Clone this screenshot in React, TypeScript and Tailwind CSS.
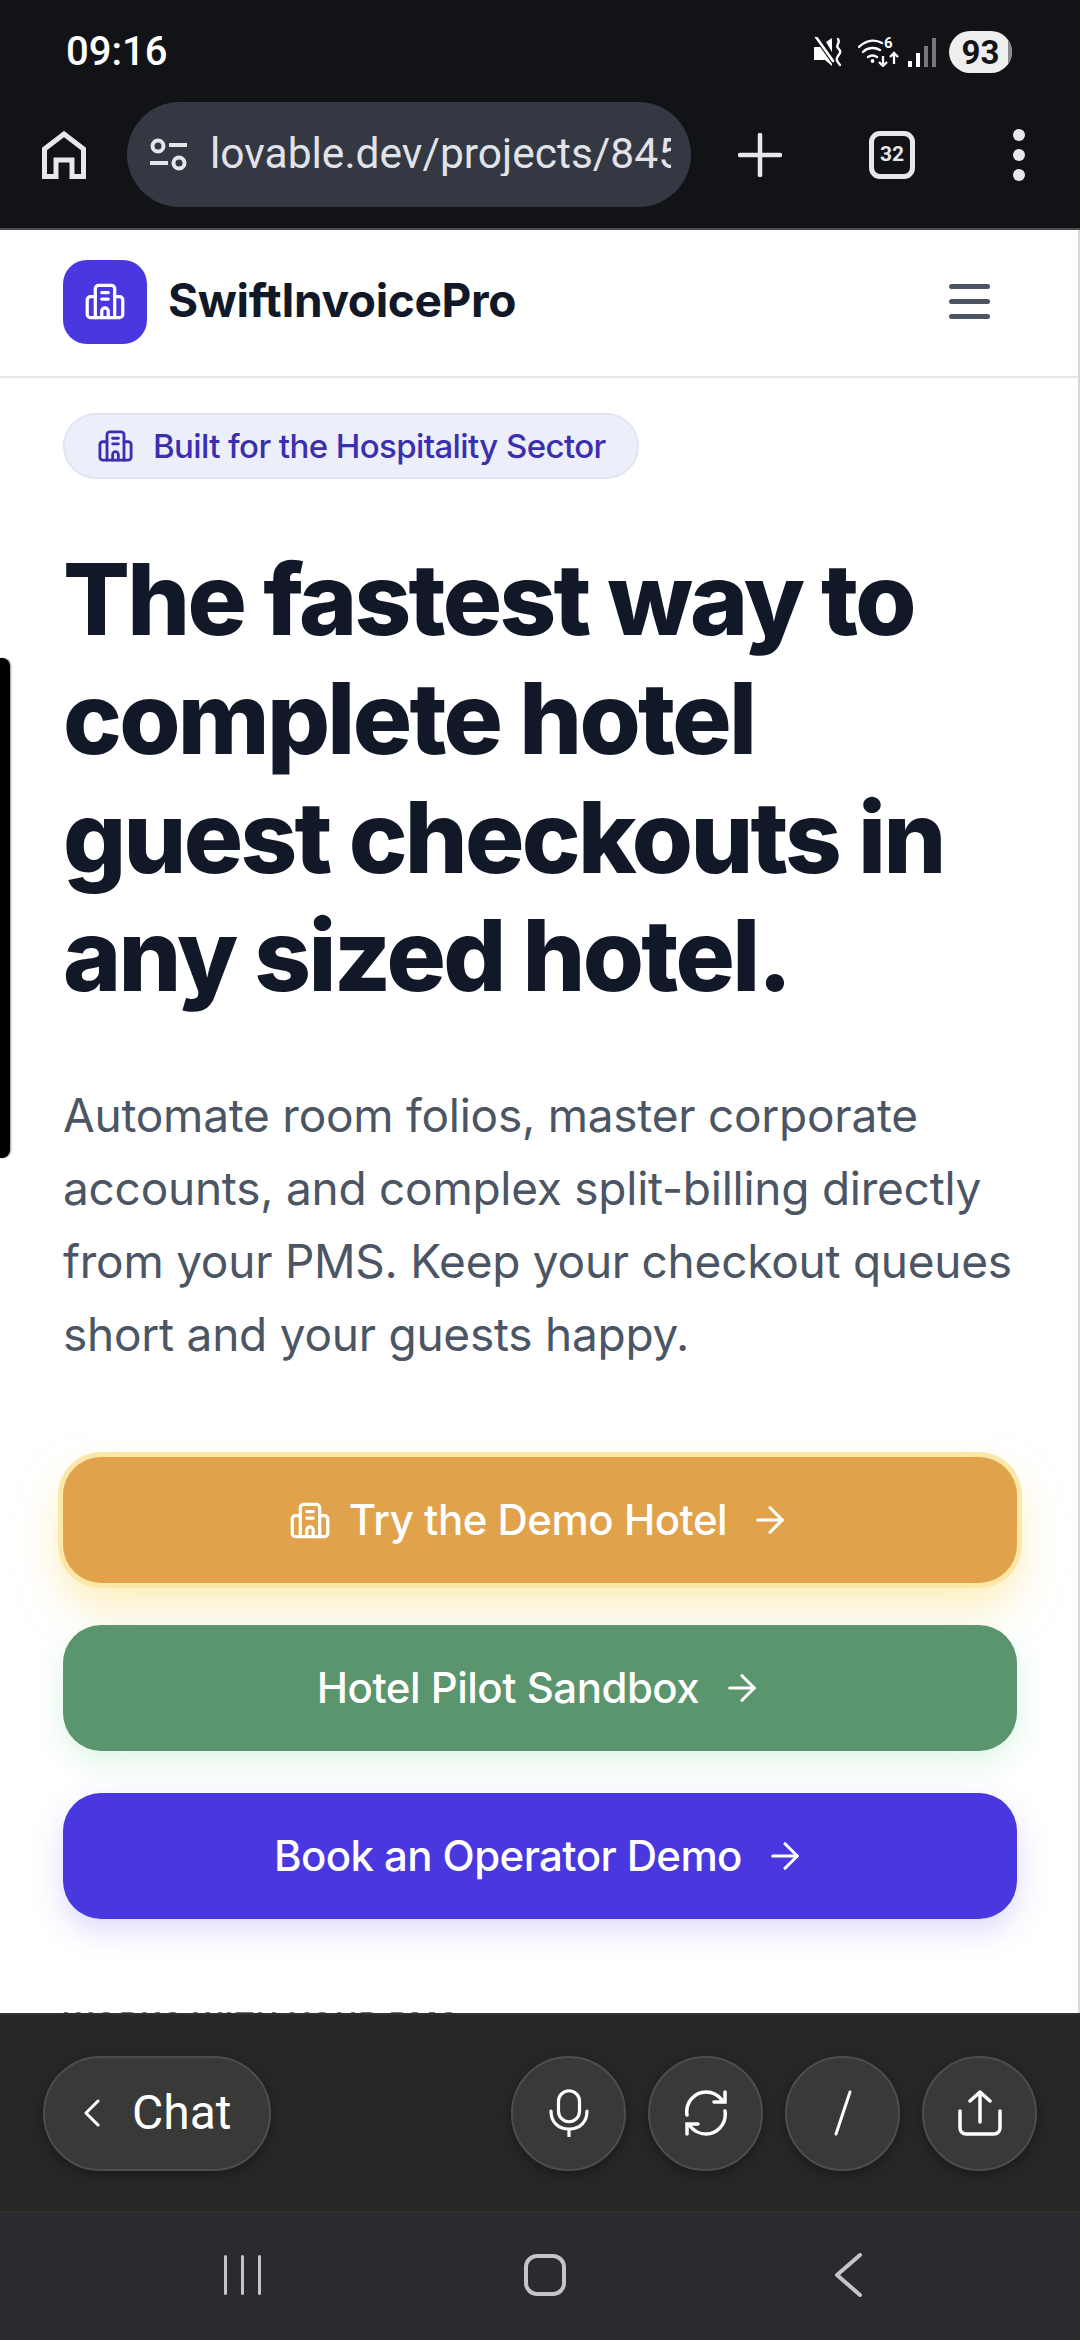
import React from "react";

function HotelIcon({ className }: { className: string }) {
  return (
    <svg viewBox="0 0 26 24" fill="none" stroke="currentColor" strokeWidth="2" strokeLinecap="round" strokeLinejoin="round" className={className}>
      <path d="M7 22V4a2 2 0 0 1 2-2h8a2 2 0 0 1 2 2v18Z" />
      <path d="M7 9H4a2 2 0 0 0-2 2v9a2 2 0 0 0 2 2h3" />
      <path d="M19 9h3a2 2 0 0 1 2 2v9a2 2 0 0 1-2 2h-3" />
      <path d="M11 6.5h4" />
      <path d="M11 10.5h4" />
      <path d="M11 22v-4a2 2 0 0 1 4 0v4" />
    </svg>
  );
}

function Arrow({ className }: { className: string }) {
  return (
    <svg viewBox="0 0 24 24" fill="none" stroke="currentColor" strokeWidth="1.8" strokeLinecap="round" strokeLinejoin="round" className={className}>
      <path d="M5 12h14" />
      <path d="m12 5 7 7-7 7" />
    </svg>
  );
}

function StatusBar() {
  return (
    <div className="flex h-[102px] items-center justify-between pl-[66px] pr-[68px] pt-[2px] font-['Roboto',sans-serif]">
      <span className="text-[40px] font-medium leading-none text-white">09:16</span>
      <div className="flex items-center">
        <svg viewBox="0 0 28 30" className="h-[30px] w-[28px] text-white">
          <path d="M0 10h6l1-1 11 14v6l-7-6H0Z" fill="currentColor" />
          <path d="M12 5l6-4v14Z" fill="currentColor" />
          <path d="M1 1l19 27" stroke="#111317" strokeWidth="2" />
          <path d="M2 0l17 24" stroke="currentColor" strokeWidth="2.6" strokeLinecap="round" />
          <path d="M24 2c3 4-3 6 0 9s3 4 0 8 0 6 2 9" fill="none" stroke="currentColor" strokeWidth="2.4" strokeLinecap="round" />
        </svg>
        <svg viewBox="0 0 42 30" className="ml-[16px] h-[30px] w-[42px] text-white">
          <path d="M1 10c7-7 16-8 23-4M5 15c5-5 12-5 17-2M10 20c3-2 6-2 9 0" fill="none" stroke="currentColor" strokeWidth="2.4" strokeLinecap="round" />
          <circle cx="14.5" cy="24" r="1.9" fill="currentColor" />
          <path d="M25 19v10m-4-4 4 4 4-4M36 27V16m-4 4 4-4 4 4" fill="none" stroke="currentColor" strokeWidth="2.3" />
        </svg>
        <span className="relative -ml-[16px] -mt-[18px] w-[10px] text-[15px] font-bold leading-none text-white">6</span>
        <svg viewBox="0 0 29 29" className="ml-[14px] h-[29px] w-[29px]">
          <rect x="0" y="23" width="4" height="6" fill="#fff" />
          <rect x="8" y="15" width="4" height="14" fill="#fff" />
          <rect x="16" y="8" width="4" height="21" fill="#77787a" />
          <rect x="24" y="0" width="4" height="29" fill="#77787a" />
        </svg>
        <div className="relative ml-[12px] flex h-[42px] w-[63px] items-center justify-center overflow-hidden rounded-full bg-[#eeeeef]">
          <div className="absolute right-0 top-0 h-full w-[4px] bg-[#8a8b8d]" />
          <span className="text-[33px] font-bold leading-none text-[#111317]">93</span>
        </div>
      </div>
    </div>
  );
}

function BrowserBar() {
  return (
    <div className="flex h-[105px] items-center">
      <svg viewBox="0 0 44 48" className="ml-[42px] h-[48px] w-[44px]" fill="none" stroke="#e8e8ec" strokeWidth="5">
        <path d="M2.5 45.5V18L22 3l19.5 15v27.5H30V29H14v16.5Z" />
      </svg>
      <div className="ml-[41px] flex h-[105px] w-[564px] items-center overflow-hidden rounded-full bg-[#333842] pl-[22px] pr-[20px]">
        <svg viewBox="0 0 40 36" className="h-[36px] w-[40px] shrink-0" fill="none" stroke="#e4e5e9" strokeWidth="4">
          <circle cx="9" cy="9" r="5.5" />
          <path d="M20 8h18" />
          <circle cx="30" cy="26" r="5.5" />
          <path d="M1 26h18" />
        </svg>
        <span className="ml-[21px] overflow-hidden whitespace-nowrap font-['Roboto',sans-serif] text-[42.5px] font-normal leading-none text-[#e2e3e8]">lovable.dev/projects/845a</span>
      </div>
      <svg viewBox="0 0 44 44" className="ml-[47px] h-[44px] w-[44px]" stroke="#e8e8ec" strokeWidth="4.5" strokeLinecap="round">
        <path d="M22 2v40M2 22h40" />
      </svg>
      <div className="ml-[87px] flex h-[48px] w-[46px] items-center justify-center rounded-[11px] border-[5px] border-[#e8e8ec] font-['Roboto',sans-serif] text-[21px] font-bold leading-none text-[#e8e8ec]">32</div>
      <div className="ml-[98px] flex flex-col gap-[8px]">
        <div className="h-[12px] w-[12px] rounded-full bg-[#e8e8ec]" />
        <div className="h-[12px] w-[12px] rounded-full bg-[#e8e8ec]" />
        <div className="h-[12px] w-[12px] rounded-full bg-[#e8e8ec]" />
      </div>
    </div>
  );
}

function CircleButton({ children }: { children: React.ReactNode }) {
  return (
    <div className="flex h-[115px] w-[115px] items-center justify-center rounded-full border-2 border-[#4d4d4b] bg-[#393937] shadow-[0_4px_10px_rgba(0,0,0,0.3)]">
      {children}
    </div>
  );
}

export default function App() {
  return (
    <div className="relative flex h-[2340px] w-[1080px] flex-col overflow-hidden bg-white font-['Inter',sans-serif]">
      <header className="h-[228px] shrink-0 bg-[#111317]">
        <StatusBar />
        <BrowserBar />
      </header>
      <div className="h-[2px] shrink-0 bg-[#4a4b4d]" />

      <main className="min-h-0 flex-1 overflow-hidden border-r-2 border-[#d8d8da]">
        <nav className="flex h-[148px] items-center justify-between border-b-2 border-[#e5e7eb] pb-[3px] pl-[63px] pr-[88px]">
          <div className="flex items-center">
            <div className="flex h-[84px] w-[84px] items-center justify-center rounded-[24px] bg-[#4938e0] text-white">
              <HotelIcon className="h-[39px] w-[42px]" />
            </div>
            <span className="mb-[4px] ml-[21px] text-[46px] font-bold leading-none tracking-[-0.35px] text-[#111827]">SwiftInvoicePro</span>
          </div>
          <div className="flex flex-col gap-[10px]">
            <div className="h-[5px] w-[41px] rounded-full bg-[#4b5563]" />
            <div className="h-[5px] w-[41px] rounded-full bg-[#4b5563]" />
            <div className="h-[5px] w-[41px] rounded-full bg-[#4b5563]" />
          </div>
        </nav>

        <div className="pl-[63px] pr-[61px] pt-[35px]">
          <div className="flex h-[66px] w-[576px] items-center rounded-full border-2 border-[#e0e4f5] bg-[#eceff9] pl-[32px] text-[#3b2fb0]">
            <HotelIcon className="h-[34px] w-[37px]" />
            <span className="ml-[19px] whitespace-nowrap text-[33px] font-medium leading-none tracking-[-0.6px]">Built for the Hospitality Sector</span>
          </div>

          <h1 className="mt-[61px] text-[99px] font-extrabold leading-[118.8px] tracking-[-2.7px] text-[#111827]">
            The fastest way to
            <br />
            complete hotel
            <br />
            guest checkouts in
            <br />
            any sized hotel.
          </h1>

          <p className="mt-[64px] text-[46px] leading-[73px] tracking-[-0.25px] text-[#4b5563]">
            Automate room folios, master corporate
            <br />
            accounts, and complex split-billing directly
            <br />
            from your PMS. Keep your checkout queues
            <br />
            short and your guests happy.
          </p>

          <div className="mt-[86px] flex flex-col gap-[42px]">
            <div className="flex h-[126px] items-center justify-center rounded-[38px] bg-[#e0a24b] text-white shadow-[0_0_0_5px_#fbe8a8,0_22px_44px_rgba(250,220,110,0.5)]">
              <HotelIcon className="h-[39px] w-[42px]" />
              <span className="ml-[18px] text-[42px] font-medium leading-none tracking-[-0.5px]">Try the Demo Hotel</span>
              <Arrow className="ml-[22px] h-[42px] w-[42px]" />
            </div>
            <div className="flex h-[126px] items-center justify-center rounded-[38px] bg-[#5a956d] text-white shadow-[0_12px_30px_rgba(120,220,160,0.25)]">
              <span className="text-[42px] font-medium leading-none tracking-[-0.5px]">Hotel Pilot Sandbox</span>
              <Arrow className="ml-[22px] h-[42px] w-[42px]" />
            </div>
            <div className="flex h-[126px] items-center justify-center rounded-[38px] bg-[#4938e0] text-white shadow-[0_12px_30px_rgba(120,110,240,0.25)]">
              <span className="text-[42px] font-medium leading-none tracking-[-0.6px]">Book an Operator Demo</span>
              <Arrow className="ml-[22px] h-[42px] w-[42px]" />
            </div>
          </div>

          <p className="mt-[89px] text-[30px] font-semibold uppercase leading-none tracking-[1.5px] text-[#6b7280]">Works with your PMS</p>
        </div>
      </main>

      <div className="flex h-[200px] shrink-0 items-center justify-between border-y-2 border-[#30302f] bg-[#262624] pl-[43px] pr-[43px]">
        <div className="flex h-[115px] w-[228px] items-center rounded-full border-2 border-[#4d4d4b] bg-[#393937] pl-[38px] text-white shadow-[0_4px_10px_rgba(0,0,0,0.3)]">
          <svg viewBox="0 0 17 28" className="h-[28px] w-[17px]" fill="none" stroke="currentColor" strokeWidth="3" strokeLinecap="round" strokeLinejoin="round">
            <path d="M15 2 3 14l12 12" />
          </svg>
          <span className="ml-[32px] font-['Roboto',sans-serif] text-[48px] font-normal leading-none">Chat</span>
        </div>
        <div className="flex gap-[22px]">
          <CircleButton>
            <svg viewBox="0 0 40 48" className="h-[48px] w-[40px]" fill="none" stroke="#fff" strokeWidth="3.2" strokeLinecap="round">
              <rect x="9.5" y="1.75" width="21" height="31" rx="10.5" />
              <path d="M2 22c0 11 7 18 18 18s18-7 18-18M20 40v7" />
            </svg>
          </CircleButton>
          <CircleButton>
            <svg viewBox="0 0 44 46" className="h-[46px] w-[44px]" fill="none" stroke="#fff" strokeWidth="3.5" strokeLinecap="round">
              <path d="M3 25C1 12 11 2 22 2c7 0 12 3 16 8" />
              <path d="M41 2v10H30" />
              <path d="M41 21c2 13-8 23-19 23-7 0-12-3-16-8" />
              <path d="M3 44V34h11" />
            </svg>
          </CircleButton>
          <CircleButton>
            <svg viewBox="0 0 20 46" className="h-[46px] w-[20px]" fill="none" stroke="#fff" strokeWidth="3" strokeLinecap="round">
              <path d="M17 2 3 44" />
            </svg>
          </CircleButton>
          <CircleButton>
            <svg viewBox="0 0 44 46" className="h-[46px] w-[44px]" fill="none" stroke="#fff" strokeWidth="3.5" strokeLinecap="round" strokeLinejoin="round">
              <path d="M22 32V2M12 11l10-9 10 9" />
              <path d="M2 21v17a6 6 0 0 0 6 6h28a6 6 0 0 0 6-6V21" />
            </svg>
          </CircleButton>
        </div>
      </div>

      <div className="relative flex h-[127px] shrink-0 items-center bg-[#2a2b30] pb-[3px]">
        <div className="ml-[224px] flex gap-[14px]">
          <div className="h-[40px] w-[3px] rounded-full bg-[#c4c5c9]" />
          <div className="h-[40px] w-[3px] rounded-full bg-[#c4c5c9]" />
          <div className="h-[40px] w-[3px] rounded-full bg-[#c4c5c9]" />
        </div>
        <div className="ml-[263px] h-[42px] w-[42px] rounded-[13px] border-[4px] border-[#c4c5c9]" />
        <svg viewBox="0 0 28 44" className="ml-[268px] h-[44px] w-[28px]" fill="none" stroke="#c4c5c9" strokeWidth="4" strokeLinecap="round" strokeLinejoin="round">
          <path d="M26 2 3 22l23 20" />
        </svg>
      </div>

      <div className="absolute left-0 top-[658px] h-[500px] w-[10px] rounded-r-[8px] bg-black shadow-[1px_0_2px_rgba(0,0,0,0.4)]" />
    </div>
  );
}
